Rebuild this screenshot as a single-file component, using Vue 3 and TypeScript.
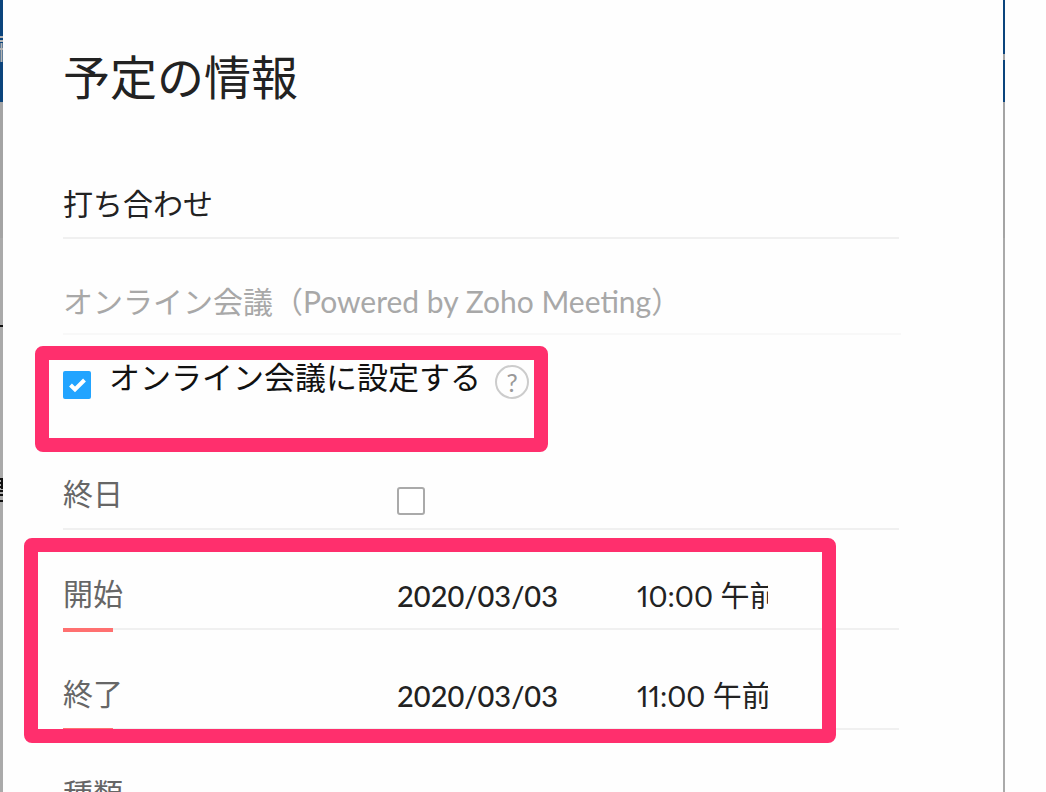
<script setup lang="ts">
import { ref } from 'vue'

interface Slot {
  id: string
  label: string
  date: string
  time: string
}

const subject = ref('打ち合わせ')
const online = ref(true)
const allDay = ref(false)
const slots = ref<Slot[]>([
  { id: 'start', label: '開始', date: '2020/03/03', time: '10:00 午前' },
  { id: 'end', label: '終了', date: '2020/03/03', time: '11:00 午前' },
])
</script>

<template>
  <div class="page">
    <div class="backdrop left" aria-hidden="true">
      <svg width="3" height="510" viewBox="0 0 3 510">
        <path d="M0 37h3M0 41h3M0 49h3M1.500 43v19" fill="none" stroke="#b4b4b4" stroke-width="2" />
        <path d="M0 326h3M0 479h3M0 483h3M0 487h3M0 491h3M0 495h3M0 501h3M2 479v10" fill="none" stroke="#111" stroke-width="2" />
      </svg>
    </div>
    <main class="dialog">
      <h1>予定の情報</h1>
      <form @submit.prevent>
        <div class="subject">
          <input v-model="subject" type="text" aria-label="件名" />
        </div>
        <h2>オンライン会議（Powered by Zoho Meeting）</h2>
        <div class="online marked">
          <input id="online" v-model="online" type="checkbox" />
          <label for="online">オンライン会議に設定する</label>
          <button type="button" class="help">?</button>
        </div>
        <div class="row">
          <label for="allday">終日</label>
          <input id="allday" v-model="allDay" type="checkbox" />
        </div>
        <div class="slots marked">
          <div v-for="slot in slots" :key="slot.id" class="row required">
            <label :for="slot.id">{{ slot.label }}</label>
            <input :id="slot.id" v-model="slot.date" class="date" type="text" />
            <input v-model="slot.time" class="time" type="text" :aria-label="slot.label + '時刻'" />
          </div>
        </div>
        <div class="row">
          <span>種類</span>
        </div>
      </form>
    </main>
    <div class="backdrop right" aria-hidden="true">
      <svg width="2" height="70" viewBox="0 0 2 70">
        <rect y="54" width="2" height="6" fill="#a4a4a4" />
      </svg>
    </div>
  </div>
</template>

<style>
body {
  margin: 0;
  background: #fff;
}
</style>

<style scoped>
.page {
  display: flex;
  height: 100vh;
  padding-right: 41px;
  overflow: hidden;
  box-sizing: border-box;
  background: #fefefe;
  font-family: Lato, "Noto Sans CJK JP", sans-serif;
  font-size: 30px;
  line-height: 40px;
  color: #222;
}

.backdrop {
  flex: none;
  width: 3px;
  overflow: hidden;
  background: linear-gradient(#0b447c 102px, #a4a4a4 102px, #a4a4a4 238px, #aaa 238px);
}

.backdrop svg {
  display: block;
}

.backdrop.right {
  width: 2px;
}

.dialog {
  flex: 1;
  min-width: 0;
  padding: 43px 104px 0 60px;
  background: #fefefe;
}

h1,
h2 {
  margin: 0;
  font-weight: 400;
}

h1 {
  font-size: 47px;
  font-weight: 400;
  line-height: 68px;
}

.subject {
  margin-top: 60px;
  padding: 12px 0 14px;
  border-bottom: 2px solid #f0f0f0;
}

input[type="text"] {
  display: block;
  width: 100%;
  height: 40px;
  box-sizing: border-box;
  padding: 0;
  border: 0;
  outline: 0;
  background: none;
  font: inherit;
  color: inherit;
}

h2 {
  margin: 42px -2px 0 0;
  padding-bottom: 12px;
  border-bottom: 2px solid #f8f8f8;
  font-size: 30px;
  line-height: 40px;
  color: #a8a8a8;
}

.marked {
  position: relative;
}

.marked::after {
  content: "";
  position: absolute;
  box-sizing: border-box;
  border: 14px solid #ff2f6d;
  border-radius: 8px;
  pointer-events: none;
}

.online {
  display: flex;
  height: 95px;
  padding-top: 22px;
  box-sizing: border-box;
}

.online::after {
  top: 11px;
  left: -28px;
  width: 513px;
  height: 106px;
}

.online label {
  margin-left: 18px;
  font-size: 31px;
  color: #111;
}

input[type="checkbox"] {
  appearance: none;
  flex: none;
  width: 28px;
  height: 28px;
  margin: 14px 0 0;
  border: 2px solid #aaa;
  border-radius: 3px;
  background: #fff;
}

input[type="checkbox"]:checked {
  border: 0;
  border-radius: 2px;
  background: #22a4ff url("data:image/svg+xml,%3Csvg xmlns='http://www.w3.org/2000/svg' viewBox='0 0 28 28'%3E%3Cpath d='M7.500 14l4.500 4.500L21.500 9' fill='none' stroke='white' stroke-width='4'/%3E%3C/svg%3E");
}

.help {
  width: 34px;
  height: 34px;
  margin: 8px 0 0 14px;
  padding: 0;
  border: 2px solid #ccc;
  border-radius: 50%;
  background: none;
  font-family: inherit;
  font-size: 25px;
  line-height: 28px;
  color: #999;
}

.row {
  position: relative;
  display: flex;
  height: 100px;
  padding-top: 43px;
  box-sizing: border-box;
  border-bottom: 2px solid #f0f0f0;
}

.row > label,
.row > span {
  flex: none;
  width: 334px;
  color: #666;
}

.required::after {
  content: "";
  position: absolute;
  bottom: -4px;
  left: 0;
  width: 50px;
  height: 4px;
  background: #ff7070;
}

.row .date,
.row .time {
  margin-top: 3px;
  font-size: 29px;
}

.row .date {
  width: 170px;
  font-weight: 500;
}

.row .time {
  width: 131px;
  margin-left: 70px;
  font-variant-numeric: proportional-nums;
}

.slots::after {
  top: 8px;
  left: -39px;
  width: 812px;
  height: 205px;
}
</style>
